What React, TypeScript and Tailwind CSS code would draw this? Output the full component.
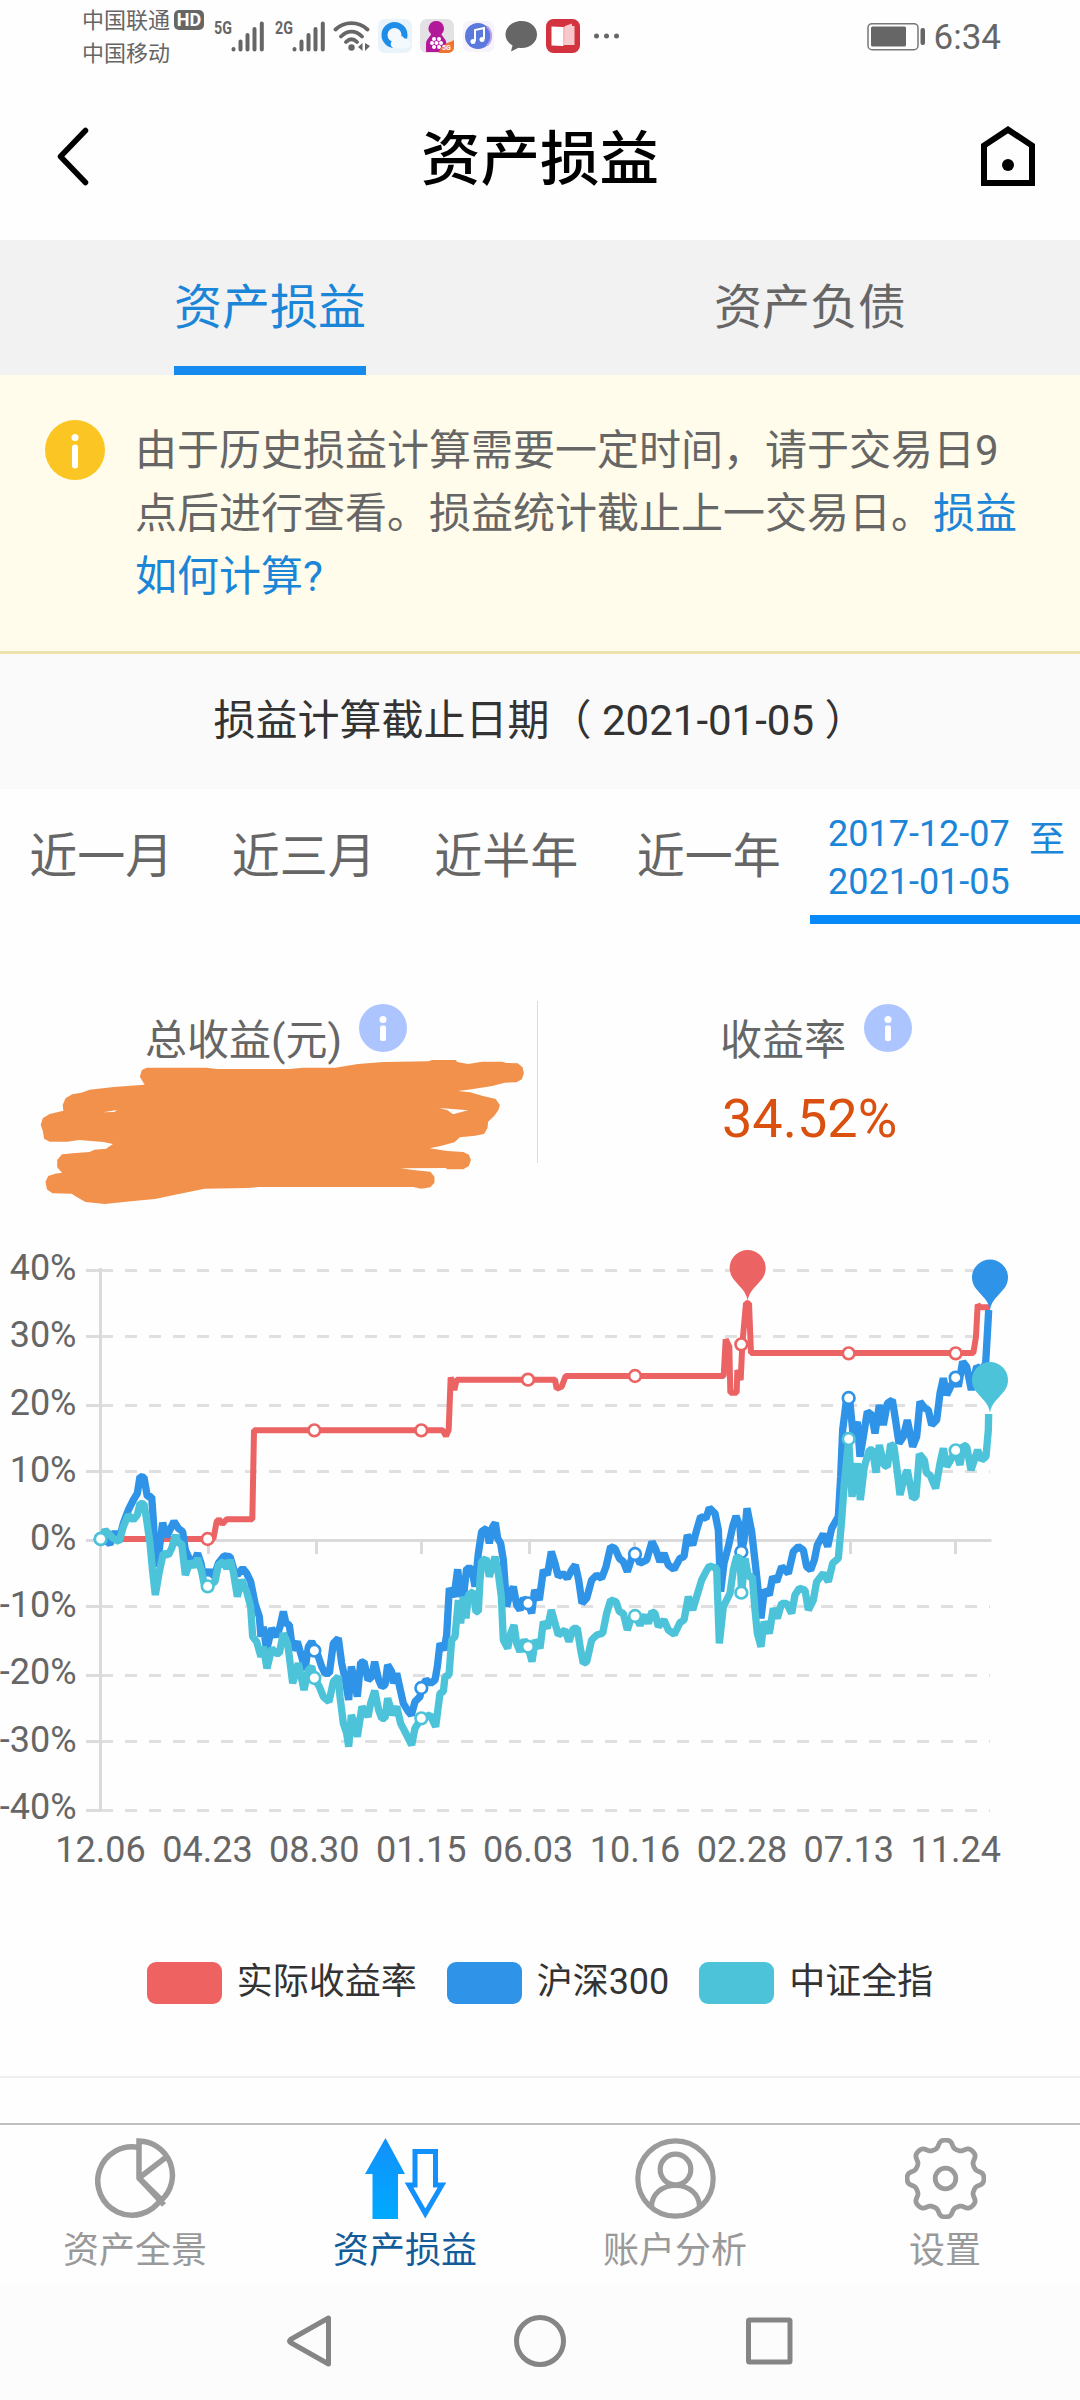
import { ReactNode } from "react";
import classNames from "clsx";

type Point = [number, number];

// One recorded piece of a series: an offset followed by its x,y pairs.
type Segment = { dx: number; dy: number; points: string };

type Series = {
  name: string;
  color: string;
  swatch: string;
  width: number;
  segments: Segment[];
  symbols: Point[];
  pin: Point;
};

const series: Series[] = [
  {
    name: "实际收益率",
    color: "#ec6364",
    swatch: "bg-[#ef6262]",
    width: 18,
    segments: [
      {
        dx: 0,
        dy: 0,
        points:
          "302,957 640,957 650,905 657,898 667,912 680,898 757,898 762,631 943,631",
      },
      {
        dx: 1020,
        dy: 360,
        points:
          "244,271 308,271 318,288 326,270 332,112 343,150 350,119 645,119 650,146 665,140 677,108 885,108",
      },
      {
        dx: 2040,
        dy: 30,
        points:
          "0,438 131,438 137,328 148,350 151,488 170,488 172,420 182,450 187,343 198,220 207,220 213,369 880,369 888,320 893,224 900,232 930,232",
      },
    ],
    symbols: [
      [623, 957],
      [943, 631],
      [1264, 631],
      [1584, 479],
      [1905, 468],
      [2224, 373],
      [2546, 400],
      [2867, 400],
    ],
    pin: [2243, 144],
  },
  {
    name: "沪深300",
    color: "#2f93e8",
    swatch: "bg-[#2f93e8]",
    width: 22,
    segments: [
      {
        dx: 0,
        dy: 0,
        points:
          "302,957 318,962 330,972 345,935 357,960 370,910 385,870 400,840 412,820 420,770 432,772 442,830 455,830 460,900",
      },
      {
        dx: 0,
        dy: 840,
        points:
          "463,120 471,200 488,68 500,110 522,64 535,85 548,95 556,150 570,180 582,185 593,160 603,190 612,240 628,210 640,235 655,190 672,168 690,170 702,210 712,225 728,205 740,220 752,245 765,310 778,350 783,410 790,380 800,450 815,385 830,410 840,380 850,335 858,370 868,375 878,450 892,425 905,470 915,510 925,440 935,425 950,455 965,500 975,520 988,520 1000,430 1015,415 1025,490 1036,540 1046,600 1054,500 1064,545 1072,590",
      },
      {
        dx: 1020,
        dy: 780,
        points:
          "62,548 72,545 84,600 95,590 104,545 116,600 125,620 135,615 143,555 155,575 160,610 170,580 180,625 190,670 205,695 214,705 225,665 240,650 244,623 258,600 272,610 285,600 292,560 300,490 312,510 320,465 328,325 342,350 353,268 362,350 372,335 380,265 395,265 405,320 415,220 425,155 440,145 448,190 458,140 466,128 473,175 482,190 490,240 500,380 508,350 520,320 530,375 540,390 550,355 564,370 575,400 584,330 598,360 610,270 622,285 634,215 645,250 655,290 668,280 682,295 695,270 706,255 716,300 726,370 740,355 755,300 770,285 785,295 798,260 812,200 825,205 838,235 850,245 862,275 875,235 885,220 900,250 920,240 936,185 946,205 960,245 972,220 985,255 1002,268",
      },
      {
        dx: 2040,
        dy: 30,
        points:
          "0,985 12,980 22,915 38,945 50,900 62,860 78,865 88,834 105,850 115,900 122,1085 132,1000 145,950 158,890 168,858 180,890 185,965 192,930 201,835 215,905 228,1020 243,1165 253,1080 268,1095 278,1040 290,1055 305,1010 325,1030 340,965 355,950 370,960 380,1010 392,1020 403,990 412,945 430,912 443,950 455,895 475,860 482,740 488,600 500,505 510,520 520,620 532,575 540,680 550,620 562,545 575,555 585,610 598,525 610,585 622,520 637,510 645,560 657,640 670,620 682,570 698,650 710,620 720,515 735,535 745,540 755,585 770,570 780,490 790,445 800,495 812,470 826,443 835,470 848,395 860,410 874,480 890,410 905,420 917,400 925,260 926,240",
      },
    ],
    symbols: [
      [302, 957],
      [623, 1083],
      [943, 1292],
      [1264, 1404],
      [1584, 1150],
      [1905, 1002],
      [2224, 996],
      [2546, 534],
      [2867, 473],
    ],
    pin: [2970, 172],
  },
  {
    name: "中证全指",
    color: "#4dc3da",
    swatch: "bg-[#4dc3da]",
    width: 22,
    segments: [
      {
        dx: 0,
        dy: 840,
        points:
          "302,117 315,90 325,100 340,115 357,125 370,80 385,45 400,60 412,45 420,10 432,12 440,60 450,130 458,215 466,285 478,215 490,160 505,165 515,145 527,105 535,130 545,130 556,225 570,185 582,200 593,175 605,215 612,250 623,258 645,245 655,195 670,185 680,205 690,180 700,215 712,290 725,240 740,275 752,320 758,410 770,425 783,470 790,440 801,505 815,445 828,460 838,460 850,400 863,430 878,550 895,490 912,570 925,510 935,500 943,535 958,560 970,590 987,605 1000,545 1015,530 1020,590 1030,670 1040,700 1046,740 1054,645 1064,670 1072,710",
      },
      {
        dx: 1020,
        dy: 780,
        points:
          "66,680 84,710 92,670 104,632 116,690 125,715 135,715 143,655 158,705 170,680 182,730 200,765 215,795 225,745 244,715 270,705 287,740 300,640 310,635 315,590 327,585 335,480 345,470 355,360 362,430 370,350 378,415 385,345 400,335 408,395 415,395 420,300 425,245 438,235 448,290 465,230 475,280 484,350 490,480 503,505 512,460 522,435 530,490 540,515 552,480 564,500 576,545 586,480 600,505 610,425 622,445 634,390 645,430 655,465 675,450 687,485 700,445 712,445 722,510 730,550 740,545 755,480 770,465 788,460 800,400 812,360 828,365 838,395 850,400 862,450 875,410 885,408 900,435 915,405 925,430 936,395 945,400 955,440 972,420 985,450 1003,463",
      },
      {
        dx: 2040,
        dy: 30,
        points:
          "0,1178 12,1170 25,1100 38,1140 50,1100 65,1050 78,1025 88,1008 110,1015 118,1240 130,1130 150,1090 160,1020 170,980 180,985 185,1088 195,985 205,1040 217,1040 225,1140 232,1210 243,1250 252,1175 268,1210 280,1135 292,1165 305,1120 320,1120 335,1150 345,1095 358,1075 375,1080 385,1140 400,1110 410,1055 430,1030 445,1055 458,1000 475,985 485,870 492,770 506,627 516,800 532,700 541,810 553,710 568,660 578,660 588,728 598,645 612,705 622,710 632,642 642,650 650,710 660,795 672,745 682,720 698,805 708,800 718,672 733,690 740,730 750,735 767,775 780,700 790,655 800,710 812,690 826,661 840,705 850,645 860,650 873,720 893,660 905,690 918,680 925,600 926,552",
      },
    ],
    symbols: [
      [302, 957],
      [623, 1099],
      [943, 1374],
      [1264, 1495],
      [1584, 1280],
      [1905, 1188],
      [2224, 1118],
      [2546, 657],
      [2867, 691],
    ],
    pin: [2970, 480],
  },
];

const yTicks = [
  { label: "40%", y: 50.5 },
  { label: "30%", y: 116.5 },
  { label: "20%", y: 185.5 },
  { label: "10%", y: 251.5 },
  { label: "0%", y: 320.5 },
  { label: "-10%", y: 386.5 },
  { label: "-20%", y: 455.5 },
  { label: "-30%", y: 521.5 },
  { label: "-40%", y: 590.5 },
];

const xTicks = [
  { label: "12.06", x: 100.5 },
  { label: "04.23", x: 208.5 },
  { label: "08.30", x: 316.5 },
  { label: "01.15", x: 421.5 },
  { label: "06.03", x: 529.5 },
  { label: "10.16", x: 634.5 },
  { label: "02.28", x: 742.5 },
  { label: "07.13", x: 850.5 },
  { label: "11.24", x: 955.5 },
];

const toPoints = (segments: Segment[]): string =>
  segments
    .flatMap(({ dx, dy, points }) =>
      points.split(" ").map((pair) => {
        const [x, y] = pair.split(",").map(Number);
        return `${x + dx},${y + dy}`;
      })
    )
    .join(" ");

const gearPath = (): string => {
  const points: string[] = [];
  for (let i = 0; i < 240; i++) {
    const angle = (i / 240) * Math.PI * 2;
    const wave = Math.tanh(1.6 * Math.cos(8 * angle)) / Math.tanh(1.6);
    const r = 34.6 + 3.8 * wave;
    points.push(
      `${(40.5 + r * Math.sin(angle)).toFixed(2)} ${(
        40.5 -
        r * Math.cos(angle)
      ).toFixed(2)}`
    );
  }
  return `M${points.join("L")}Z`;
};

const SignalBars = () => (
  <svg width="34" height="31" viewBox="0 0 34 31" className="text-[#666]">
    <g stroke="currentColor" strokeWidth="4" strokeLinecap="round">
      <path d="M2.5 28v.5M9.5 20.5v8M16.5 14v14.5M23.5 8v20.5M30.8 2.5v26" />
    </g>
  </svg>
);

const StatusBar = () => (
  <div className="flex h-[75px] items-start pl-[82px] text-[#666]">
    <div className="w-[88px] pt-1 text-[22px] leading-[33px]">
      <div>中国联通</div>
      <div>中国移动</div>
    </div>
    <div className="mt-2.5 ml-1 flex h-5 w-[30px] items-center justify-center rounded-[5px] bg-[#666] text-[18px] leading-5 font-bold text-white">
      HD
    </div>
    <div className="mt-[18px] ml-2.5 w-[17px] origin-left scale-x-75 text-[19px] leading-5 font-bold">
      5G
    </div>
    <div className="mt-[21px]">
      <SignalBars />
    </div>
    <div className="mt-[18px] ml-2.5 w-[17px] origin-left scale-x-75 text-[19px] leading-5 font-bold">
      2G
    </div>
    <div className="mt-[21px]">
      <SignalBars />
    </div>
    <svg
      className="mt-5 ml-[7px]"
      width="38"
      height="32"
      viewBox="0 0 38 32"
      fill="none"
      stroke="#666"
      strokeWidth="3.8"
      strokeLinecap="round"
    >
      <path d="M2.5 9.5C11.500 1 25.500 1 34.500 9.5M8 16.500C14.500 10 22.500 10 29 16.500M13 22C16.500 18.500 20.500 18.500 24 22" />
      <circle cx="18.500" cy="27.500" r="3.200" fill="#666" stroke="none" />
      <path d="M29.500 23v8l-4.500-4zM32 23v8l5-5z" fill="#666" stroke="none" />
    </svg>
    <svg className="mt-[19px] ml-[7px]" width="35" height="34" viewBox="0 0 35 34">
      <rect width="34" height="34" rx="7" fill="#e8f3fa" />
      <circle cx="16.500" cy="16" r="10" fill="#f4f9fd" stroke="#1e8ee8" strokeWidth="6" />
      <path
        d="M17 29.500a4.500 4.500 0 0 1 .5-9 5 5 0 0 1 9-1 5 5 0 0 1 2 10z"
        fill="#f4f9fd"
      />
    </svg>
    <svg className="mt-[19px] ml-[7px]" width="34" height="34" viewBox="0 0 34 34">
      <rect width="34" height="34" rx="7" fill="#e4e1e4" />
      <path
        d="M16.500 2a7.500 7.500 0 0 1 5 13c0 2 5 5 5 10v8H6v-8c0-5 5-8 5-10a7.500 7.500 0 0 1 5.500-13z"
        fill="#b3189a"
      />
      <g fill="#fff">
        <circle cx="16.500" cy="24" r="2" />
        <circle cx="12" cy="24" r="2" />
        <circle cx="21" cy="24" r="2" />
        <circle cx="14" cy="20" r="2" />
        <circle cx="19" cy="20" r="2" />
        <circle cx="14" cy="28" r="2" />
        <circle cx="19" cy="28" r="2" />
      </g>
      <path d="M19 34c1-8 7-9 15-13v7c0 4-3 6-7 6z" fill="#ef7430" />
      <text x="22" y="31" fontSize="7" fill="#fff" fontWeight="700">
        5G
      </text>
    </svg>
    <svg className="mt-[21px] ml-[9px]" width="31" height="31" viewBox="0 0 31 31">
      <rect width="31" height="31" rx="6" fill="#f6f3fb" />
      <circle cx="15" cy="15" r="13" fill="#5b78dc" />
      <path d="M24 5.500A13 13 0 0 1 24 24.500" fill="none" stroke="#b9a0ef" strokeWidth="2" />
      <path d="M12 20V9l9-2v11" fill="none" stroke="#fff" strokeWidth="2" />
      <circle cx="10" cy="20.500" r="2.500" fill="#fff" />
      <circle cx="19" cy="18.500" r="2.500" fill="#fff" />
    </svg>
    <svg className="mt-[21px] ml-[11px]" width="33" height="31" viewBox="0 0 33 31">
      <path
        d="M16.500 0C25.500 0 32 6 32 13.500S25.500 27 16.500 27c-1 0-2 0-3-.3L6 30.500l1.500-6C3 22 .5 18 .5 13.500.5 6 7.500 0 16.500 0z"
        fill="#666"
      />
    </svg>
    <svg className="mt-[19px] ml-[8px]" width="34" height="34" viewBox="0 0 34 34">
      <rect width="34" height="34" rx="7.500" fill="#d3323f" />
      <path d="M5.500 7.500 17 8v19l-11.500-.5z" fill="#fff" />
      <path d="M17 8l2-.5v18L17 27z" fill="#f6b9bc" />
      <path d="M19 7l7-2.500v17.500l-7 3zM26 7h2.500v19H17z" fill="#f8c9cb" />
    </svg>
    <svg className="mt-[33px] ml-[14px]" width="26" height="6" viewBox="0 0 26 6">
      <g fill="#666">
        <circle cx="2.500" cy="3" r="2.500" />
        <circle cx="12.500" cy="3" r="2.500" />
        <circle cx="22.500" cy="3" r="2.500" />
      </g>
    </svg>
    <svg className="mt-[22px] ml-auto" width="60" height="29" viewBox="0 0 60 29">
      <rect x="1" y="1.700" width="50" height="26" rx="4" fill="none" stroke="#777" strokeWidth="1.500" />
      <rect x="4" y="4.500" width="35" height="20" rx="1.500" fill="#666" />
      <rect x="53.500" y="6" width="4.500" height="17" rx="2" fill="#666" />
    </svg>
    <div className="mt-[17px] mr-[79px] ml-[7px] text-[35px] leading-[42px]">6:34</div>
  </div>
);

const Header = () => (
  <header className="flex h-[165px] items-center justify-between pr-[45px] pl-[56px]">
    <svg
      className="-mt-px"
      width="54"
      height="60"
      viewBox="0 0 54 60"
      fill="none"
      stroke="#000"
      strokeWidth="5.500"
      strokeLinecap="round"
      strokeLinejoin="round"
    >
      <path d="M29.500 3.500 4.500 29.500l25 26" />
    </svg>
    <h1 className="mt-1 mr-[11px] text-[59.500px] leading-[80px] font-medium text-black">
      资产损益
    </h1>
    <svg className="-mt-[3px]" width="54" height="60" viewBox="0 0 54 60" fill="none">
      <path d="M3 57V19.500L27 3.700l24 15.800V57z" stroke="#000" strokeWidth="6" />
      <circle cx="27" cy="39" r="6" fill="#000" />
    </svg>
  </header>
);

const mainTabs = [
  { label: "资产损益", isActive: true },
  { label: "资产负债", isActive: false },
];

const MainTabs = () => (
  <div className="flex h-[135px] bg-[#f2f2f2]">
    {mainTabs.map(({ label, isActive }) => (
      <div key={label} className="flex flex-1 justify-center">
        <div
          className={classNames(
            "w-[192px] border-b-[9px] text-[48px] leading-[135px]",
            isActive
              ? "border-[#168bef] text-[#1b85d8]"
              : "border-transparent text-[#666]"
          )}
        >
          {label}
        </div>
      </div>
    ))}
  </div>
);

const Notice = () => (
  <div className="flex h-[279px] border-b-[3px] border-[#ebe2b0] bg-[#fffceb] pl-[45px]">
    <svg className="mt-[45px] shrink-0" width="60" height="60" viewBox="0 0 60 60">
      <circle cx="30" cy="30" r="30" fill="#fbc524" />
      <circle cx="30" cy="17.500" r="3.500" fill="#fff" />
      <rect x="27" y="24.500" width="6" height="24" rx="3" fill="#fff" />
    </svg>
    <p className="mt-[44px] ml-[30px] text-[42px] leading-[63px] whitespace-nowrap text-[#666]">
      由于历史损益计算需要一定时间，请于交易日9
      <br />
      点后进行查看。损益统计截止上一交易日。
      <span className="text-[#1b85d8]">
        损益
        <br />
        如何计算?
      </span>
    </p>
  </div>
);

const ranges = ["近一月", "近三月", "近半年", "近一年"];

const RangeTabs = () => (
  <div className="flex h-[135px]">
    {ranges.map((range) => (
      <div
        key={range}
        className="w-[202.5px] text-center text-[48px] leading-[136px] text-[#666]"
      >
        {range}
      </div>
    ))}
    <div className="flex w-[270px] border-b-[9px] border-[#0889f8] pl-[18px] text-[36px] text-[#1b85d8]">
      <div className="w-[201px] pt-[21px] leading-[48px]">
        2017-12-07
        <br />
        2021-01-05
      </div>
      <div className="pt-[27px] leading-[48px]">至</div>
    </div>
  </div>
);

const InfoDot = () => (
  <svg width="48" height="48" viewBox="0 0 48 48">
    <circle cx="24" cy="24" r="24" fill="#adc5ff" />
    <circle cx="24" cy="15.500" r="3.500" fill="#fff" />
    <rect x="21" y="21.500" width="6" height="15.500" rx="2" fill="#fff" />
  </svg>
);

// Marker strokes that cover the amount.
const Scribble = () => (
  <svg
    className="absolute top-[57px] left-[40px]"
    width="486"
    height="148"
    viewBox="58 834 706 444"
    preserveAspectRatio="none"
  >
    <path
      fill="#f2914b"
      fillRule="evenodd"
      d="M203 890L206 870L213 863L300 863L315 867L420 867L440 863L487 863L520 852L557 846L622 844L628 840L662 840L664 846L680 852L700 845L730 845L735 849L752 850L759 862L761 880L758 898L750 907L733 908L715 918L685 928L665 933L683 937L700 947L720 957L726 975L724 990L718 1007L709 1025L708 1045L703 1062L690 1067L668 1072L660 1087L640 1098L624 1105L650 1113L673 1116L681 1124L684 1140L681 1158L673 1168L650 1168L647 1164L582 1165L600 1170L625 1175L631 1190L631 1208L625 1222L612 1226L600 1221L375 1221L360 1224L297 1226L265 1240L225 1257L190 1264L152 1272L124 1266L112 1252L104 1241L76 1240L68 1228L66 1205L70 1188L80 1181L90 1178L83 1162L83 1140L90 1123L110 1119L130 1116L137 1109L154 1106L164 1092L150 1086L115 1080L98 1085L72 1085L64 1076L62 1052L59 1035L62 1015L72 1002L92 992L91 975L95 955L105 943L118 938L130 929L165 921L210 914ZM638 984L650 991L658 1003L680 991L662 988ZM150 997L170 990L166 996Z"
    />
  </svg>
);

const Summary = () => (
  <section className="relative flex h-[219px]">
    <div className="flex w-[537px] pl-[145px] text-[42px] text-[#666]">
      <div className="mt-[8px] leading-[63px]">总收益(元)</div>
      <div className="mt-[3px] ml-[17px]">
        <InfoDot />
      </div>
    </div>
    <div className="h-[162px] w-px bg-[#dcdcdc]" />
    <div className="flex flex-1 flex-col pl-[182px]">
      <div className="flex text-[42px] text-[#666]">
        <div className="mt-[8px] leading-[63px]">收益率</div>
        <div className="mt-[3px] ml-[18px]">
          <InfoDot />
        </div>
      </div>
      <div className="mt-[15px] ml-[2px] text-[54px] leading-[64px] text-[#d9500f]">34.52%</div>
    </div>
    <Scribble />
  </section>
);

const Pin = ({ at: [x, y], color }: { at: Point; color: string }) => (
  <path
    transform={`translate(${x} ${y})`}
    d="M-43 33A54 54 0 1 1 43 33C24 57 4 70 0 98C-4 70-24 57-43 33Z"
    fill={color}
  />
);

const Chart = () => (
  <svg width="1080" height="670" viewBox="0 0 1080 670" className="block">
    {yTicks.map(({ label, y }, index) => (
      <g key={label}>
        {label !== "0%" && (
          <path
            d={`M101 ${y}H990`}
            stroke="#e0e0e1"
            strokeWidth="3"
            strokeDasharray="12 12"
          />
        )}
        <path d={`M86 ${y}H101`} stroke="#dcdcde" strokeWidth="3" />
        <text x="76.500" y={60 + index * 67.4} textAnchor="end" fontSize="36" fill="#666">
          {label}
        </text>
      </g>
    ))}
    <g stroke="#dadadc" strokeWidth="3">
      <path d="M100.500 48V592M86 320.500H991.500" />
      {xTicks.map(({ label, x }) => (
        <path key={label} d={`M${x} 320V334`} />
      ))}
    </g>
    {xTicks.map(({ label }, index) => (
      <text
        key={label}
        x={100.5 + index * 106.9}
        y="642"
        textAnchor="middle"
        fontSize="36"
        fill="#666"
      >
        {label}
      </text>
    ))}
    <g transform="scale(0.333333)">
      {series.map(({ name, color, width, segments, symbols }) => (
        <g key={name} stroke={color}>
          <polyline
            points={toPoints(segments)}
            fill="none"
            strokeWidth={width}
            strokeLinejoin="bevel"
          />
          {symbols.map(([cx, cy]) => (
            <circle key={cx} cx={cx} cy={cy} r="17.500" fill="#fff" strokeWidth="8" />
          ))}
        </g>
      ))}
      {series.map(({ name, color, pin }) => (
        <Pin key={name} at={pin} color={color} />
      ))}
    </g>
  </svg>
);

const Legend = () => (
  <div className="mt-[72px] flex h-[42px] justify-center gap-[30px] text-[36px] leading-[40px] text-[#333]">
    {series.map(({ name, swatch }) => (
      <div key={name} className="flex gap-[15px]">
        <div className={classNames("h-[42px] w-[75px] rounded-[9px]", swatch)} />
        {name}
      </div>
    ))}
  </div>
);

const PieIcon = () => (
  <g fill="none" stroke="#9b9b9b" strokeWidth="5.500">
    <path d="M44 9.500A34.200 34.200 0 1 0 66 61" />
    <path d="M44 3A34 34 0 0 1 66.500 62L44 40ZM44 40L70 20" />
    <path d="M44 40L69 67" />
  </g>
);

const ArrowsIcon = () => (
  <g>
    <defs>
      <linearGradient id="up" x1="0" y1="0" x2="0" y2="1">
        <stop offset="0" stopColor="#1290fb" />
        <stop offset="1" stopColor="#00aaff" />
      </linearGradient>
    </defs>
    <path d="M20.500 0L40 36H33V81H7.500V36H0Z" fill="url(#up)" />
    <path
      d="M50 13.500H70.500V47H77L60.300 75.500L44 47H50Z"
      fill="none"
      stroke="#1290fb"
      strokeWidth="5"
    />
  </g>
);

const UserIcon = () => (
  <g fill="none" stroke="#9b9b9b" strokeWidth="5.200">
    <circle cx="40.500" cy="40.500" r="37.700" />
    <circle cx="40.500" cy="31.500" r="15.300" />
    <path d="M16.500 69C16.500 56 27 47.500 40.500 47.500S64.500 56 64.500 69" />
  </g>
);

const GearIcon = () => (
  <g fill="none" stroke="#9b9b9b" strokeWidth="4.800">
    <path d={gearPath()} strokeLinejoin="round" />
    <circle cx="40.500" cy="40.500" r="10.300" />
  </g>
);

const navItems: { label: string; icon: ReactNode; isActive?: boolean }[] = [
  { label: "资产全景", icon: <PieIcon /> },
  { label: "资产损益", icon: <ArrowsIcon />, isActive: true },
  { label: "账户分析", icon: <UserIcon /> },
  { label: "设置", icon: <GearIcon /> },
];

const BottomNav = () => (
  <nav className="flex h-[160px] border-t-2 border-[#bfbfbf]">
    {navItems.map(({ label, icon, isActive }) => (
      <div key={label} className="flex flex-1 flex-col items-center pt-[13px]">
        <svg width="81" height="81" viewBox="0 0 81 81">
          {icon}
        </svg>
        <div
          className={classNames(
            "mt-[8px] text-[36px] leading-[48px]",
            isActive ? "text-[#135c99]" : "text-[#999]"
          )}
        >
          {label}
        </div>
      </div>
    ))}
  </nav>
);

const SystemNav = () => (
  <div className="flex h-[117px] justify-center bg-[#fcfcfc] pt-[31px]">
    <svg
      width="508"
      height="54"
      viewBox="0 0 508 54"
      fill="none"
      stroke="#858585"
      strokeWidth="5"
      strokeLinejoin="round"
    >
      <path d="M42.500 4V50L4.500 28.500Q2.500 27 4.500 25.500Z" />
      <circle cx="254" cy="27" r="23.500" />
      <rect x="462.500" y="6" width="41.500" height="42" rx="1" />
    </svg>
  </div>
);

export default function App() {
  return (
    <div className="flex h-[2400px] w-[1080px] flex-col overflow-hidden bg-[#fefefe] font-[Roboto,'Noto_Sans_CJK_SC',sans-serif]">
      <StatusBar />
      <Header />
      <MainTabs />
      <Notice />
      <div className="h-[135px] bg-[#fafafa] text-center text-[42px] leading-[133px] text-[#333]">
        损益计算截止日期（ 2021-01-05 ）
      </div>
      <RangeTabs />
      <div className="h-[77px]" />
      <Summary />
      <Chart />
      <Legend />
      <div className="mt-[72px] h-[2px] bg-[#efefef]" />
      <div className="h-[45px]" />
      <BottomNav />
      <SystemNav />
    </div>
  );
}
